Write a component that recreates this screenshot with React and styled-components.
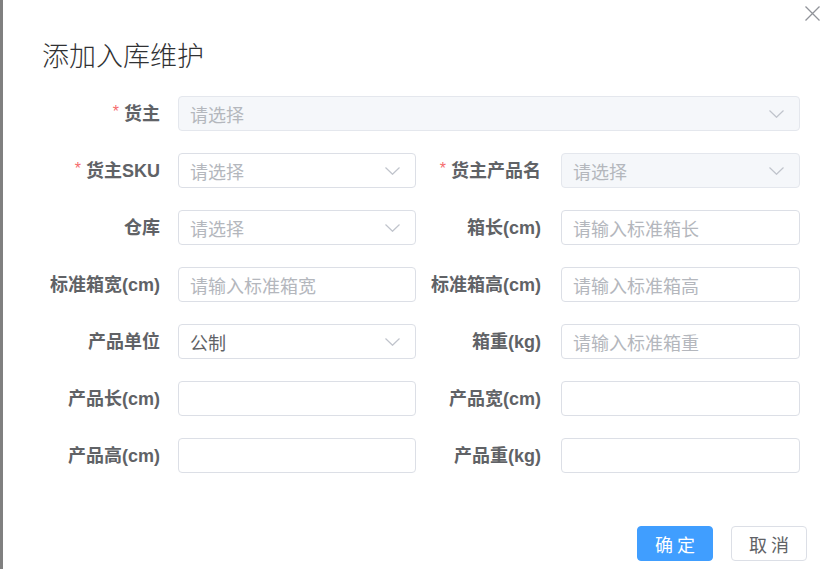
import React from "react";
import styled, { createGlobalStyle } from "styled-components";

const Global = createGlobalStyle`
  html, body {
    margin: 0;
    padding: 0;
    background: #fff;
    overflow: hidden;
  }
  body {
    font-family: "Liberation Sans", "Noto Sans CJK SC", sans-serif;
  }
`;

const rows = [
  [{ label: "货主", required: true, type: "select", placeholder: "请选择", disabled: true, wide: true }],
  [
    { label: "货主SKU", required: true, type: "select", placeholder: "请选择" },
    { label: "货主产品名", required: true, type: "select", placeholder: "请选择", disabled: true },
  ],
  [
    { label: "仓库", type: "select", placeholder: "请选择" },
    { label: "箱长(cm)", type: "input", placeholder: "请输入标准箱长" },
  ],
  [
    { label: "标准箱宽(cm)", type: "input", placeholder: "请输入标准箱宽" },
    { label: "标准箱高(cm)", type: "input", placeholder: "请输入标准箱高" },
  ],
  [
    { label: "产品单位", type: "select", value: "公制" },
    { label: "箱重(kg)", type: "input", placeholder: "请输入标准箱重" },
  ],
  [
    { label: "产品长(cm)", type: "input" },
    { label: "产品宽(cm)", type: "input" },
  ],
  [
    { label: "产品高(cm)", type: "input" },
    { label: "产品重(kg)", type: "input" },
  ],
];

const Page = styled.div`
  display: flex;
  height: 569px;
`;

const Strip = styled.div`
  width: 3px;
  flex-shrink: 0;
  background: #808080;
`;

const Dialog = styled.div`
  flex: 1;
  position: relative;
  display: flex;
  flex-direction: column;
  background: #fff;
`;

const Title = styled.h2`
  margin: 0;
  padding: 35px 0 0 39px;
  font-family: "Noto Sans CJK SC", "Liberation Sans", sans-serif;
  font-size: 27px;
  line-height: 40px;
  font-weight: 300;
  color: #303133;
`;

const Close = styled.button`
  position: absolute;
  top: 5px;
  right: 7px;
  width: 17px;
  height: 17px;
  padding: 0;
  border: none;
  background: none;
  cursor: pointer;
  display: flex;
`;

const Form = styled.div`
  display: grid;
  grid-template-columns: 175px 238px 145px 239px;
  row-gap: 22px;
  margin-top: 21px;
`;

const Label = styled.label`
  display: flex;
  align-items: center;
  justify-content: flex-end;
  box-sizing: border-box;
  padding: 0 ${(p) => (p.$right ? 20 : 18)}px 4px 0;
  height: 35px;
  font-size: 18px;
  font-weight: bold;
  color: #606266;
  white-space: nowrap;
`;

const Star = styled.span`
  color: #f56c6c;
  font-weight: normal;
  margin-right: 5px;
  font-size: 16px;
`;

const Field = styled.div`
  grid-column: ${(p) => (p.$wide ? "2 / 5" : "auto")};
  box-sizing: border-box;
  height: 35px;
  display: flex;
  align-items: center;
  padding: 0 15px 0 11px;
  border: 1px solid ${(p) => (p.$disabled ? "#e4e7ed" : "#dcdfe6")};
  border-radius: 4px;
  background: ${(p) => (p.$disabled ? "#f5f7fa" : "#fff")};
  font-family: "Noto Sans CJK SC", "Liberation Sans", sans-serif;
  font-size: 18px;
  color: ${(p) => (p.$placeholder ? "#b4b7bd" : "#606266")};
`;

const Text = styled.span`
  flex: 1;
  white-space: nowrap;
  padding-top: 1px;
`;

const Footer = styled.div`
  margin-top: auto;
  display: flex;
  justify-content: flex-end;
  gap: 18px;
  padding: 0 21px 8px 0;
`;

const Button = styled.button`
  width: 76px;
  height: 35px;
  box-sizing: border-box;
  border-radius: 4px;
  border: 1px solid ${(p) => (p.$primary ? "#409eff" : "#dcdfe6")};
  background: ${(p) => (p.$primary ? "#409eff" : "#fff")};
  color: ${(p) => (p.$primary ? "#fff" : "#606266")};
  font-family: "Noto Sans CJK SC", "Liberation Sans", sans-serif;
  font-size: 18px;
  letter-spacing: 4px;
  padding: 0 0 0 4px;
  cursor: pointer;
`;

const Chevron = () => (
  <svg width="15" height="8" viewBox="0 0 15 8" fill="none">
    <path d="M0.5 0.5 L7.5 7.3 L14.5 0.5" stroke="#c0c4cc" strokeWidth="1.2" />
  </svg>
);

const CloseIcon = () => (
  <svg width="17" height="17" viewBox="0 0 17 17" fill="none">
    <path d="M1.5 1.5 L15.5 15.5 M15.5 1.5 L1.5 15.5" stroke="#909399" strokeWidth="1.3" />
  </svg>
);

const Item = ({ item, right }) => (
  <>
    <Label $right={right}>
      {item.required && <Star>*</Star>}
      {item.label}
    </Label>
    <Field $wide={item.wide} $disabled={item.disabled} $placeholder={!item.value}>
      <Text>{item.value || item.placeholder || ""}</Text>
      {item.type === "select" && <Chevron />}
    </Field>
  </>
);

export default function App() {
  return (
    <Page>
      <Global />
      <Strip />
      <Dialog>
        <Title>添加入库维护</Title>
        <Close aria-label="close">
          <CloseIcon />
        </Close>
        <Form>
          {rows.map((row, i) =>
            row.map((item, j) => <Item key={`${i}-${j}`} item={item} right={j === 1} />)
          )}
        </Form>
        <Footer>
          <Button $primary>确定</Button>
          <Button>取消</Button>
        </Footer>
      </Dialog>
    </Page>
  );
}
